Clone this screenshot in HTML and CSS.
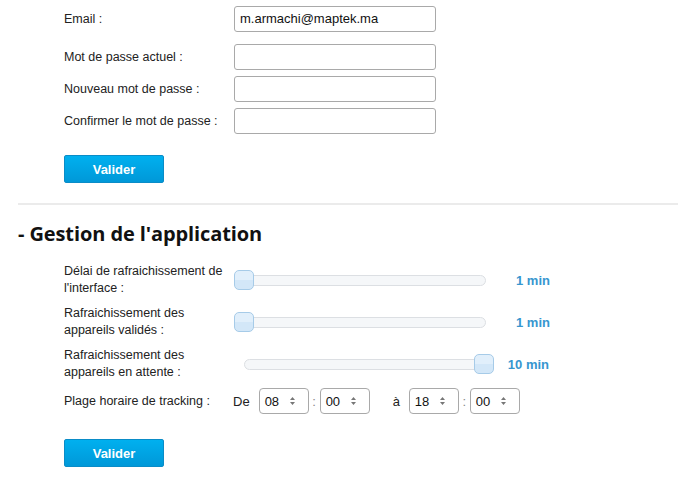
FILE: index.html
```html
<!DOCTYPE html>
<html lang="fr">
<head>
<meta charset="utf-8">
<title>Paramètres</title>
<link rel="stylesheet" href="styles.css">
</head>
<body>
<div class="page">
  <form class="form account">
    <div class="row row-email">
      <label class="lbl">Email :</label>
      <div class="input">m.armachi@maptek.ma</div>
    </div>
    <div class="row row-pw first">
      <label class="lbl">Mot de passe actuel :</label>
      <div class="input"></div>
    </div>
    <div class="row row-pw">
      <label class="lbl">Nouveau mot de passe :</label>
      <div class="input"></div>
    </div>
    <div class="row row-pw">
      <label class="lbl">Confirmer le mot de passe :</label>
      <div class="input"></div>
    </div>
    <div class="actions first-actions"><button type="button" class="btn">Valider</button></div>
  </form>

  <hr class="sep">

  <h2 class="section-title">- Gestion de l'application</h2>

  <form class="form app">
    <div class="srow">
      <label class="lbl two">Délai de rafraichissement de l'interface :</label>
      <div class="slider"><div class="track"></div><span class="handle"></span></div>
      <span class="val">1 min</span>
    </div>
    <div class="srow">
      <label class="lbl two">Rafraichissement des appareils validés :</label>
      <div class="slider"><div class="track"></div><span class="handle"></span></div>
      <span class="val">1 min</span>
    </div>
    <div class="srow">
      <label class="lbl two">Rafraichissement des appareils en attente :</label>
      <div class="slider max"><div class="track"></div><span class="handle"></span></div>
      <span class="val">10 min</span>
    </div>
    <div class="trow">
      <label class="lbl">Plage horaire de tracking :</label>
      <span class="word">De</span>
      <div class="sel"><span>08</span><svg width="5" height="8" viewBox="0 0 5 8"><path d="M0 3h5L2.5 0z M0 5h5L2.5 8z" fill="#777"/></svg></div>
      <span class="colon">:</span>
      <div class="sel"><span>00</span><svg width="5" height="8" viewBox="0 0 5 8"><path d="M0 3h5L2.5 0z M0 5h5L2.5 8z" fill="#777"/></svg></div>
      <span class="word a">à</span>
      <div class="sel"><span>18</span><svg width="5" height="8" viewBox="0 0 5 8"><path d="M0 3h5L2.5 0z M0 5h5L2.5 8z" fill="#777"/></svg></div>
      <span class="colon">:</span>
      <div class="sel"><span>00</span><svg width="5" height="8" viewBox="0 0 5 8"><path d="M0 3h5L2.5 0z M0 5h5L2.5 8z" fill="#777"/></svg></div>
    </div>
    <div class="actions second-actions"><button type="button" class="btn">Valider</button></div>
  </form>
</div>
</body>
</html>
```
FILE: styles.css
```css
html, body {
  margin: 0;
  padding: 0;
  background: #fff;
}
body {
  font-family: "Liberation Sans", Arial, sans-serif;
  font-size: 12px;
  color: #222;
}
.page {
  width: 678px;
}
.form {
  margin: 0;
  padding-left: 64px;
}
.account {
  padding-top: 6px;
}
.row {
  display: flex;
  align-items: center;
  height: 26px;
}
.row.first {
  margin-top: 12px;
}
.row-pw + .row-pw {
  margin-top: 6px;
}
.lbl {
  width: 170px;
  flex: none;
  font-size: 12.5px;
  line-height: 17px;
  color: #222;
}
.input {
  box-sizing: border-box;
  width: 202px;
  height: 26px;
  border: 1px solid #a9a9a9;
  border-radius: 3px;
  padding: 0 5px;
  font-size: 13px;
  line-height: 24px;
  color: #111;
}
.actions {
  display: flex;
}
.first-actions {
  margin-top: 21px;
}
.second-actions {
  margin-top: 25px;
}
.btn {
  box-sizing: border-box;
  width: 100px;
  height: 28px;
  padding: 0;
  border: 1px solid #0a8cc7;
  border-radius: 2px;
  background: linear-gradient(#00b0ef, #0098d8);
  color: #fff;
  font-family: "Liberation Sans", Arial, sans-serif;
  font-weight: bold;
  font-size: 13px;
  cursor: pointer;
}
.sep {
  margin: 20px 0 0 18px;
  border: 0;
  border-top: 2px solid #ebebeb;
  height: 0;
}
.section-title {
  margin: 15px 0 0 18px;
  font-family: "Open Sans", sans-serif;
  font-weight: bold;
  font-size: 20px;
  letter-spacing: -0.1px;
  line-height: 28px;
  color: #111;
}
.app {
  margin-top: 15px;
}
.srow {
  display: flex;
  align-items: center;
  height: 34px;
}
.srow + .srow {
  margin-top: 8px;
}
.lbl.two {
  width: 165px;
  margin-right: 5px;
}
.slider {
  position: relative;
  width: 252px;
  height: 11px;
  flex: none;
  margin-top: 1px;
}
.slider.max {
  margin-left: 10px;
  width: 250px;
}
.track {
  box-sizing: border-box;
  height: 11px;
  border: 1px solid #dcdfe3;
  border-radius: 6px;
  background: #f5f7f9;
}
.handle {
  position: absolute;
  left: 0;
  top: -5px;
  box-sizing: border-box;
  width: 20px;
  height: 20px;
  border: 1px solid #a6cbe8;
  border-radius: 5px;
  background: linear-gradient(#e1effb 50%, #d3e7f8 50%);
}
.slider.max .handle {
  left: auto;
  right: 0;
}
.val {
  width: 64px;
  text-align: right;
  font-weight: bold;
  font-size: 13px;
  color: #3796cf;
}
.slider.max + .val {
  width: 55px;
}
.trow {
  display: flex;
  align-items: center;
  height: 26px;
  margin-top: 7px;
}
.word {
  font-size: 13px;
  color: #222;
  margin-left: -1px;
  margin-right: 9px;
}
.word.a {
  margin-left: 23px;
  margin-right: 9px;
}
.colon {
  width: 11px;
  text-align: center;
  font-size: 13px;
  color: #888;
}
.sel {
  box-sizing: border-box;
  width: 50px;
  height: 26px;
  border: 1px solid #a9a9a9;
  border-radius: 4px;
  display: flex;
  align-items: center;
  justify-content: space-between;
  padding: 0 13px 0 5px;
  font-size: 13px;
  color: #111;
}
.sel svg {
  display: block;
}
```
